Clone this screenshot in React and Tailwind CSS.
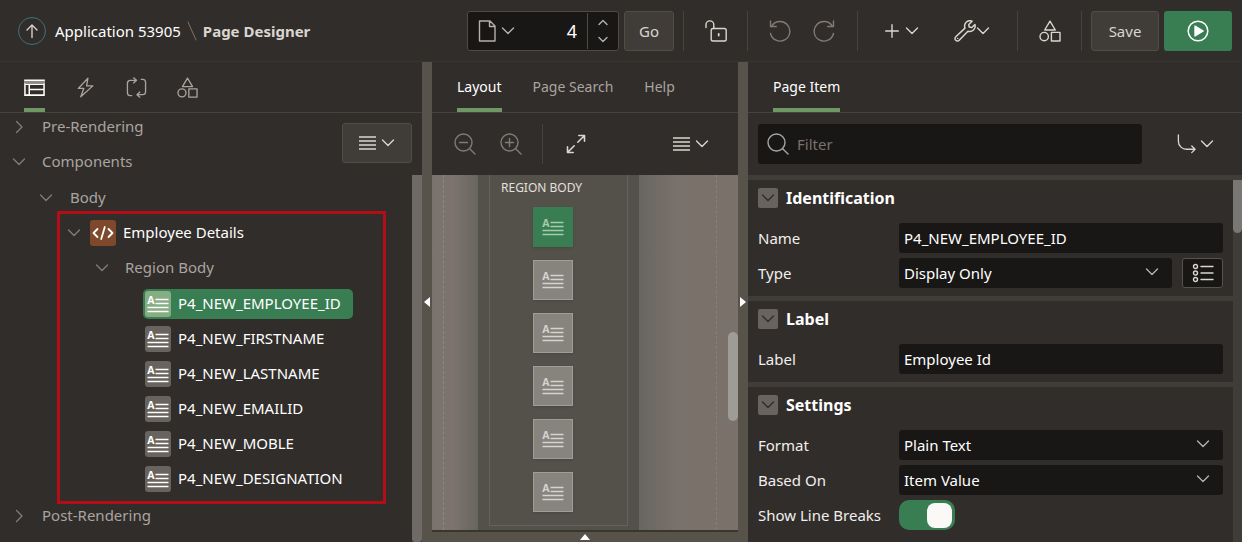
import React from "react";

const svgProps = {
  fill: "none",
  stroke: "currentColor",
  strokeWidth: 1.4,
  strokeLinecap: "round",
  strokeLinejoin: "round",
  "aria-hidden": true,
};

function Icon({ size = 22, children, className = "shrink-0" }) {
  return (
    <svg {...svgProps} width={size} height={size} viewBox="0 0 22 22" className={className}>
      {children}
    </svg>
  );
}

const Shapes = ({ size }) => (
  <Icon size={size}>
    <path d="M11 1.2 16.3 10H5.7Z" />
    <circle cx="5.2" cy="16.6" r="4.2" />
    <rect x="12.4" y="12.4" width="8.6" height="8.6" />
  </Icon>
);

function Chevron({ dir = "down", className = "shrink-0" }) {
  const d = { down: "M1.5 4 7 9.5 12.5 4", right: "M4.5 1.5 10 7 4.5 12.5" }[dir];
  return (
    <svg {...svgProps} width="14" height="14" viewBox="0 0 14 14" className={className}>
      <path d={d} />
    </svg>
  );
}

const MenuLines = () => (
  <svg {...svgProps} width="17" height="14" viewBox="0 0 17 14" strokeLinecap="butt" className="shrink-0">
    <path d="M0 1h17M0 5h17M0 9h17M0 13h17" />
  </svg>
);

const ItemGlyph = () => (
  <svg {...svgProps} width="26" height="26" viewBox="0 0 26 26" strokeLinecap="butt" strokeWidth="1.5" className="shrink-0">
    <text x="2.2" y="13" fontSize="10.5" fontWeight="700" fontFamily="Noto Sans, sans-serif" fill="currentColor" stroke="none">A</text>
    <path d="M10.5 8.5h13M10.5 12.5h13M2.5 16.5h21M2.5 20.5h21" />
  </svg>
);

const Divider = () => <span className="h-10 w-px shrink-0 bg-[#46423e]" />;

function Header() {
  return (
    <header className="flex h-[62px] shrink-0 items-start border-b border-[#38342f] pt-[11px] pr-[10px] pl-[18px]">
      <nav className="flex h-10 items-center" aria-label="Breadcrumb">
        <a href="#up" aria-label="Up" className="flex size-7 items-center justify-center rounded-full border border-[#41727c] text-[#d5d1cc]">
          <svg {...svgProps} width="14" height="16" viewBox="0 0 14 16">
            <path d="M7 14.5V2M2 7l5-5 5 5" />
          </svg>
        </a>
        <a href="#app" className="ml-[9px] text-white">Application 53905</a>
        <svg {...svgProps} width="10" height="20" viewBox="0 0 10 20" strokeWidth="1" className="mx-[6px] text-[#7a756f]">
          <path d="M1 1l8 18" />
        </svg>
        <span className="font-bold text-[#d9d5d0]">Page Designer</span>
      </nav>
      <div className="ml-auto flex h-10 items-center text-[#d9d5d0]">
        <div className="flex h-10 w-[152px] items-center rounded-[3px] border border-[#4e4a45] bg-[#191715]">
          <button type="button" aria-label="Page finder" className="flex h-full items-center gap-[2px] pl-[9px] text-[#b5b0ab]">
            <Icon>
              <path d="M2.500 1h10.500l5 5V21H2.500ZM12.500 1v5.500h5.500" />
            </Icon>
            <Chevron />
          </button>
          <input aria-label="Page number" defaultValue="4" className="h-full w-0 min-w-0 flex-1 bg-transparent pr-[10px] text-right text-lg text-white outline-none" />
          <span className="flex h-9 w-[31px] flex-col items-center justify-between border-l border-[#4e4a45] py-[6px] text-[#b5b0ab]">
            <button type="button" aria-label="Next page" className="flex">
              <svg {...svgProps} width="10" height="7" viewBox="0 0 10 7"><path d="M1 5.500 5 1.500l4 4" /></svg>
            </button>
            <button type="button" aria-label="Previous page" className="flex">
              <svg {...svgProps} width="10" height="7" viewBox="0 0 10 7"><path d="M1 1.500l4 4 4-4" /></svg>
            </button>
          </span>
        </div>
        <button type="button" className="mr-[9px] ml-[5px] h-10 w-[50px] rounded-[3px] border border-[#504c46] bg-[#403c38]">Go</button>
        <Divider />
        <button type="button" aria-label="Unlock page" className="flex h-10 w-[63px] items-center justify-center">
          <Icon>
            <path d="M1 7.500V4.800a3.900 3.900 0 0 1 7.800 0V8.500" />
            <rect x="6.200" y="8.500" width="15" height="12.500" rx="1.800" />
            <path d="M13.700 14v1.500" strokeWidth="1.800" />
          </Icon>
        </button>
        <Divider />
        <button type="button" aria-label="Undo" className="ml-[10px] flex h-10 w-11 items-center justify-center text-[#807b76]">
          <Icon>
            <path d="M1.500 13.500A9.800 9.800 0 1 0 2.600 6.300M1.500 1v5.500H7.300" />
          </Icon>
        </button>
        <button type="button" aria-label="Redo" className="mr-[11px] flex h-10 w-11 items-center justify-center text-[#807b76]">
          <Icon>
            <path d="M20.500 13.500A9.800 9.800 0 1 1 19.400 6.300M20.500 1v5.500H14.700" />
          </Icon>
        </button>
        <Divider />
        <button type="button" aria-label="Create" className="ml-[9px] flex h-10 w-[70px] items-center justify-center gap-[6px]">
          <svg {...svgProps} width="14" height="14" viewBox="0 0 14 14"><path d="M7 .7v12.600M.7 7h12.600" /></svg>
          <Chevron />
        </button>
        <button type="button" aria-label="Utilities" className="mr-[10px] flex h-10 w-[70px] items-center justify-center">
          <Icon>
            <path d="M12.200 2.300a5.400 5.400 0 0 1 5.900-1.100L14.800 4.600l.4 2.500 2.600.4 3.100-3a5.400 5.400 0 0 1-7 6.700L5.200 20.300a2.300 2.300 0 0 1-3.500 0 2.400 2.400 0 0 1 .1-3.500L11 8.100a5.400 5.400 0 0 1 1.200-5.800Z" strokeWidth="1.500" />
            <path d="M3.700 18.400h.1" />
          </Icon>
          <Chevron />
        </button>
        <Divider />
        <button type="button" aria-label="Shared components" className="flex h-10 w-[63px] items-center justify-center">
          <Shapes />
        </button>
        <Divider />
        <button type="button" className="ml-[9px] h-10 w-[68px] rounded-[3px] border border-[#504c46] bg-[#403c38]">Save</button>
        <button type="button" aria-label="Save and run page" className="ml-[5px] flex h-10 w-[68px] items-center justify-center rounded-[3px] bg-[#397e53] text-white">
          <Icon>
            <circle cx="11" cy="11" r="9.800" strokeWidth="1.500" />
            <path d="M8 6v10l8.200-5Z" fill="currentColor" />
          </Icon>
        </button>
      </div>
    </header>
  );
}

function Tab({ active, label, children }) {
  return (
    <button
      type="button"
      aria-label={label}
      aria-selected={!!active}
      role="tab"
      className={
        active
          ? "flex h-full items-center border-t-4 border-b-4 border-t-transparent border-b-[#6f9864] text-sm text-white"
          : "flex h-full items-center border-y-4 border-transparent text-sm text-[#a9a4a0]"
      }
    >
      {children}
    </button>
  );
}

const TabBar = ({ className, children }) => (
  <div role="tablist" className={`flex h-[51px] shrink-0 items-start border-b border-[#46423e] ${className}`}>
    {children}
  </div>
);

function TreeRow({ indent, open, children }) {
  return (
    <div className={`flex h-[35px] items-center ${indent}`}>
      <button type="button" aria-label="Toggle" className="flex text-[#807b76]">
        <Chevron dir={open ? "down" : "right"} />
      </button>
      {children}
    </div>
  );
}

function TreeItem({ name, selected }) {
  return (
    <li className="flex h-[35px] items-center pl-[143px]">
      <a
        href={`#${name}`}
        className={
          selected
            ? "flex h-[30px] items-center gap-[7px] rounded-[5px] bg-[#397e53] pr-3 pl-[2px] text-white"
            : "flex h-[30px] items-center gap-[7px] pr-3 pl-[2px] text-white"
        }
      >
        <span className={selected ? "rounded-[3px] bg-[#86ad83]" : "rounded-[3px] bg-[#68635e]"}>
          <ItemGlyph />
        </span>
        {name}
      </a>
    </li>
  );
}

const fields = ["P4_NEW_EMPLOYEE_ID", "P4_NEW_FIRSTNAME", "P4_NEW_LASTNAME", "P4_NEW_EMAILID", "P4_NEW_MOBLE", "P4_NEW_DESIGNATION"];

function TreePane() {
  return (
    <section className="flex min-h-0 min-w-0 flex-col">
      <TabBar className="gap-[30px] pl-6">
        <Tab active label="Rendering">
          <Icon size={21}>
            <path d="M1 3.500h20v15.500H1ZM5.500 7.500V19M1 7.500h20M5.500 13h15.500" strokeWidth="1.600" strokeLinejoin="miter" />
            <path d="M1 5.500h20" stroke="#8f8b87" strokeWidth="2.400" />
          </Icon>
        </Tab>
        <Tab label="Dynamic Actions">
          <Icon size={21}>
            <path d="M13.500 1.200 3.500 12h5.700L6 20.800 18.700 9.300h-6.500Z" />
          </Icon>
        </Tab>
        <Tab label="Processing">
          <Icon size={21}>
            <path d="M6 19.500H4.500a3 3 0 0 1-3-3v-10a3 3 0 0 1 3-3h6M8 .900l3 2.600-3 2.700M16 2.500h1.500a3 3 0 0 1 3 3v10a3 3 0 0 1-3 3h-6M14.500 15.800l-3 2.700 3 2.600" />
          </Icon>
        </Tab>
        <Tab label="Page Shared Components">
          <Shapes size={21} />
        </Tab>
      </TabBar>
      <div className="relative min-h-0 flex-1 overflow-hidden text-[#a9a4a0]">
        <ul className="-mt-[4px]">
          <li>
            <TreeRow indent="pl-3"><span className="pl-4">Pre-Rendering</span></TreeRow>
          </li>
          <li>
            <TreeRow indent="pl-3" open><span className="pl-4">Components</span></TreeRow>
            <ul className="pt-px">
              <li>
                <TreeRow indent="pl-[39px]" open><span className="pl-[17px]">Body</span></TreeRow>
                <ul>
                  <li className="relative">
                    <TreeRow indent="pl-[67px]" open>
                      <span className="ml-[9px] flex size-[26px] items-center justify-center rounded-[3px] bg-[#7d482b] text-white">
                        <svg {...svgProps} width="22" height="16" viewBox="0 0 22 16" strokeWidth="1.800">
                          <path d="M5.500 4 1.500 8l4 4M16.500 4l4 4-4 4M12.800 2 9.200 14" />
                        </svg>
                      </span>
                      <span className="pl-[7px] text-white">Employee Details</span>
                    </TreeRow>
                    <ul>
                      <li>
                        <TreeRow indent="pl-[95px]" open><span className="pl-4">Region Body</span></TreeRow>
                        <ul className="pt-px pb-[2px]">
                          {fields.map((f, i) => <TreeItem key={f} name={f} selected={i === 0} />)}
                        </ul>
                      </li>
                    </ul>
                    <span className="pointer-events-none absolute -top-1 right-9 -bottom-[6px] left-[57px] border-3 border-[#b30d17]" />
                  </li>
                </ul>
              </li>
            </ul>
          </li>
          <li>
            <TreeRow indent="pl-3"><span className="pl-4">Post-Rendering</span></TreeRow>
          </li>
        </ul>
        <button type="button" aria-label="Tree options" className="absolute top-[10px] right-[10px] flex h-10 w-[70px] items-center justify-center gap-[5px] rounded-[3px] border border-[#504c46] bg-[#403c38] text-[#d9d5d0]">
          <MenuLines />
          <Chevron />
        </button>
        <span className="absolute top-[62px] right-0 bottom-0 w-[10px] rounded-b-[3px] bg-[#6e6b66]" />
      </div>
    </section>
  );
}

function Splitter({ dir }) {
  return (
    <div className="flex min-h-0 items-center justify-center bg-[#57524a] text-white">
      <svg width="6" height="10" viewBox="0 0 6 10" fill="currentColor" aria-hidden="true">
        <path d={dir === "left" ? "M6 0v10L0 5Z" : "M0 0v10l6-5Z"} />
      </svg>
    </div>
  );
}

function LayoutPane() {
  return (
    <section className="flex min-h-0 min-w-0 flex-col">
      <TabBar className="gap-[31px] pl-[25px]">
        <Tab active>Layout</Tab>
        <Tab>Page Search</Tab>
        <Tab>Help</Tab>
      </TabBar>
      <div className="flex h-[62px] shrink-0 items-center pl-[22px] text-[#807b76]">
        <button type="button" aria-label="Zoom out" className="flex">
          <Icon><circle cx="9.500" cy="9.500" r="8.500" /><path d="m15.700 15.700 5.300 5.300M5.500 9.500h8" /></Icon>
        </button>
        <button type="button" aria-label="Zoom in" className="ml-6 flex">
          <Icon><circle cx="9.500" cy="9.500" r="8.500" /><path d="m15.700 15.700 5.300 5.300M5.500 9.500h8M9.500 5.500v8" /></Icon>
        </button>
        <span className="ml-5 h-10 w-px bg-[#46423e]" />
        <button type="button" aria-label="Expand" className="ml-[22px] flex text-[#d9d5d0]">
          <Icon><path d="M12.800 9.200 19 3M13.800 2.500h5.700v5.700M9.200 12.800 3 19M8.200 19.500H2.500v-5.700" strokeWidth="1.600" /></Icon>
        </button>
        <button type="button" aria-label="Layout menu" className="mr-[29px] ml-auto flex items-center gap-[5px] text-[#d9d5d0]">
          <MenuLines />
          <Chevron />
        </button>
      </div>
      <div className="relative grid min-h-0 flex-1 grid-cols-[46px_minmax(0,161fr)_minmax(0,99fr)] grid-rows-[minmax(0,1fr)] overflow-hidden">
        <div className="flex bg-linear-to-r from-[#7a736d] via-[#7c736e] via-45% to-[#68655f] pl-[11px]">
          <span className="border-l border-dashed border-[#8b8781]" />
        </div>
        <div className="bg-[#54514b] px-[11px] pb-1">
          <div className="flex h-full flex-col border-x border-b border-[#65625d] px-[11px] pt-[2px]">
            <h3 className="text-xs leading-[22px] text-[#e3e0dc]">REGION BODY</h3>
            <div className="flex flex-col items-center gap-[13px] pt-2 pr-3">
              {fields.map((f, i) => (
                <button
                  key={f}
                  type="button"
                  aria-label={f}
                  className={
                    i === 0
                      ? "flex size-10 shrink-0 items-center justify-center bg-[#397e53] text-[#a5cbb0] shadow-sm"
                      : "flex size-10 shrink-0 items-center justify-center border border-[#a09d98] bg-[#87837d] text-[#d5d3d0] shadow-sm"
                  }
                >
                  <ItemGlyph />
                </button>
              ))}
            </div>
          </div>
        </div>
        <div className="flex justify-end bg-linear-to-r from-[#686661] via-[#7a716b] via-40% to-[#7a716b] pr-[21px]">
          <span className="border-l border-dashed border-[#85807a]" />
        </div>
        <span className="absolute top-[157px] right-0 h-[89px] w-[10px] rounded-full bg-[#9f9b97]" />
      </div>
      <div className="flex h-3 shrink-0 items-center justify-center border-t-2 border-[#39352f] bg-[#57524a] text-white">
        <svg width="10" height="6" viewBox="0 0 10 6" fill="currentColor" aria-hidden="true"><path d="M5 0l5 6H0Z" /></svg>
      </div>
    </section>
  );
}

function Group({ title, last, children }) {
  return (
    <section className={last ? "bg-[#312d2a] px-[10px] py-2" : "border-b-[5px] border-[#403c38] bg-[#312d2a] px-[10px] py-2"}>
      <h2 className="flex h-5 items-center gap-2 text-base font-bold text-white">
        <button type="button" aria-label={`Collapse ${title}`} className="flex size-5 items-center justify-center rounded-[2px] bg-[#68635e] text-[#312d2a]">
          <Chevron />
        </button>
        {title}
      </h2>
      <div className="flex flex-col gap-[5px] pt-[15px]">{children}</div>
    </section>
  );
}

const Field = ({ id, label, children }) => (
  <div className="flex h-[30px] items-center">
    <label htmlFor={id} className="w-[141px] shrink-0 text-[#f1efed]">{label}</label>
    {children}
  </div>
);

const TextField = ({ id, value }) => (
  <input id={id} defaultValue={value} className="h-[30px] min-w-0 flex-1 rounded-[3px] bg-[#191715] px-[5px] text-white outline-none" />
);

const SelectField = ({ id, value }) => (
  <span className="relative flex h-[30px] min-w-0 flex-1">
    <select id={id} className="w-full appearance-none rounded-[3px] bg-[#191715] px-[5px] text-white outline-none">
      <option>{value}</option>
    </select>
    <Chevron className="pointer-events-none absolute top-[7px] right-[13px] text-[#b5b0ab]" />
  </span>
);

function PropertyPane() {
  return (
    <section className="flex min-h-0 min-w-0 flex-col">
      <TabBar className="pl-[25px]">
        <Tab active>Page Item</Tab>
      </TabBar>
      <div className="flex h-[62px] shrink-0 items-center pr-7 pl-[10px]">
        <label className="flex h-10 min-w-0 flex-1 items-center gap-2 rounded-[3px] bg-[#191715] pl-[9px] text-[#a9a4a0]">
          <Icon><circle cx="9.500" cy="9.500" r="8.500" /><path d="m15.700 15.700 5.300 5.300" /></Icon>
          <input aria-label="Filter" placeholder="Filter" className="min-w-0 flex-1 bg-transparent outline-none placeholder:text-[#77726d]" />
        </label>
        <button type="button" aria-label="Go to group" className="ml-[34px] flex items-center gap-[3px] text-[#d9d5d0]">
          <Icon size={21}><path d="M2.500 1v6.500a8.500 8.500 0 0 0 8.500 8.500h9M16.500 12.500 20 16l-3.500 3.500" /></Icon>
          <Chevron />
        </button>
      </div>
      <div className="relative min-h-0 flex-1 overflow-hidden border-t-[5px] border-[#403c38] bg-[#403c38] pr-[9px]">
        <Group title="Identification">
          <Field id="name" label="Name"><TextField id="name" value="P4_NEW_EMPLOYEE_ID" /></Field>
          <Field id="type" label="Type">
            <SelectField id="type" value="Display Only" />
            <button type="button" aria-label="Quick picks" className="ml-[10px] flex h-[30px] w-[41px] items-center justify-center rounded-[3px] border border-[#57524d] bg-[#191715] text-[#d9d5d0]">
              <Icon>
                <circle cx="3.500" cy="4.500" r="2" />
                <circle cx="3.500" cy="11" r="2" />
                <circle cx="3.500" cy="17.500" r="2" />
                <path d="M9 4.500h12M9 11h12M9 17.500h12" />
              </Icon>
            </button>
          </Field>
        </Group>
        <Group title="Label">
          <Field id="label" label="Label"><TextField id="label" value="Employee Id" /></Field>
        </Group>
        <Group title="Settings" last>
          <Field id="format" label="Format"><SelectField id="format" value="Plain Text" /></Field>
          <Field id="based" label="Based On"><SelectField id="based" value="Item Value" /></Field>
          <Field id="breaks" label="Show Line Breaks">
            <input
              id="breaks"
              type="checkbox"
              role="switch"
              defaultChecked
              className="flex h-[30px] w-14 appearance-none items-center justify-end rounded-[10px] bg-[#397e53] px-[3px] before:size-[25px] before:rounded-[8px] before:bg-[#fbf9f8] before:content-['']"
            />
          </Field>
          <div className="h-10" />
        </Group>
        <span className="absolute -top-[5px] right-0 h-[58px] w-[9px] rounded-full bg-[#797773]" />
      </div>
    </section>
  );
}

export default function App() {
  return (
    <div className="flex h-screen flex-col overflow-hidden bg-[#312d2a] font-['Noto_Sans',sans-serif] text-[15px]">
      <Header />
      <main className="grid min-h-0 flex-1 grid-cols-[minmax(0,422fr)_10px_minmax(0,306fr)_10px_minmax(0,494fr)] grid-rows-[minmax(0,1fr)]">
        <TreePane />
        <Splitter dir="left" />
        <LayoutPane />
        <Splitter dir="right" />
        <PropertyPane />
      </main>
    </div>
  );
}
